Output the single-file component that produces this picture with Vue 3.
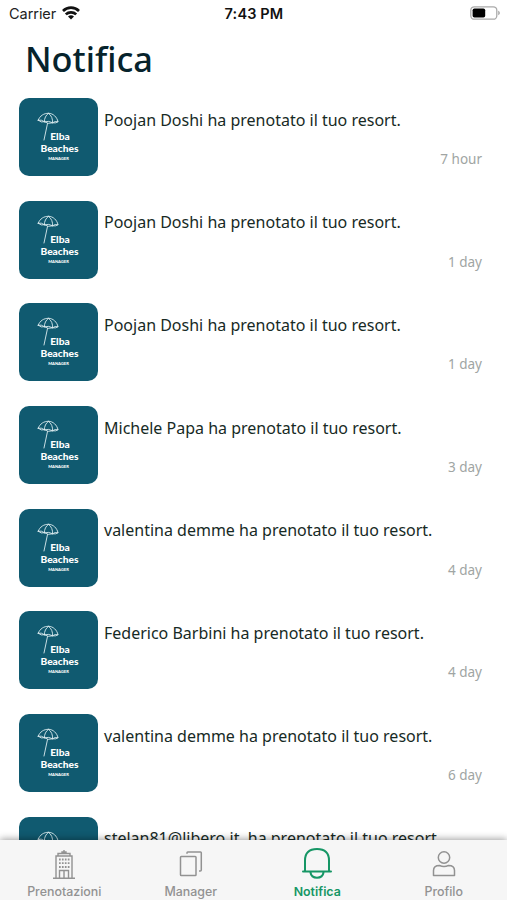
<script setup>
const notifications = [
  { id: 1, name: 'Poojan Doshi', time: '7 hour' },
  { id: 2, name: 'Poojan Doshi', time: '1 day' },
  { id: 3, name: 'Poojan Doshi', time: '1 day' },
  { id: 4, name: 'Michele Papa', time: '3 day' },
  { id: 5, name: 'valentina demme', time: '4 day' },
  { id: 6, name: 'Federico Barbini', time: '4 day' },
  { id: 7, name: 'valentina demme', time: '6 day' },
  { id: 8, name: 'stelan81@libero.it', suffix: ' ', time: '6 day' }
]
</script>

<template>
  <div class="screen">
    <header class="status">
      <div class="carrier">
        <span>Carrier</span>
        <svg class="wifi" width="18" height="14" viewBox="0 0 18 14" fill="none" stroke="#111" stroke-width="2.7">
          <path d="M1 5C5.5.6 12.5.6 17 5" />
          <path d="M3.8 8.400c2.900-2.800 7.500-2.800 10.400 0" />
          <path d="M6 10.500Q9 8.200 12 10.500L9 13.600Z" fill="#111" stroke="none" />
        </svg>
      </div>
      <span class="clock">7:43 PM</span>
      <div class="battery">
        <svg width="31" height="14" viewBox="0 0 31 14">
          <rect x=".8" y=".8" width="26" height="12.4" rx="3.5" fill="#fff" stroke="#aaa" stroke-width="1.3" />
          <rect x="2.6" y="2.5" width="12.6" height="9" rx="1.8" fill="#000" />
          <path d="M28.2 4.8c2.2.7 2.2 3.7 0 4.4Z" fill="#aaa" />
        </svg>
      </div>
    </header>

    <h1 class="title">Notifica</h1>

    <main class="list">
      <article v-for="n in notifications" :key="n.id" class="row">
        <div class="logo">
          <svg class="umbrella" width="22" height="30" viewBox="0 0 22 30" fill="none" stroke="#dcecef" stroke-width=".9" stroke-linejoin="round" stroke-linecap="round">
            <path d="M1.200 8.200C3 3.500 7 1.300 11.500 1.300S20 5 21 9.800Q18 8.800 15.500 10.800Q12 8.500 7.500 9.800Q4.500 7.300 1.200 8.200Z" />
            <path d="M1.200 8.200Q4 11 7.500 9.800M7.500 9.800Q11 12.500 15.500 10.800Q19 11.500 21 9.800" />
            <path d="M11.500 1.300C9 3 7 6.500 7.500 9.800M11.500 1.300C14.500 3.500 16 7 15.500 10.800M10.500 11.500 7 28" />
          </svg>
          <div class="brand">Elba</div>
          <div class="brand second">Beaches</div>
          <div class="role">MANAGER</div>
        </div>
        <div class="content">
          <p class="message">{{ n.name }}{{ n.suffix }} ha prenotato il tuo resort.</p>
          <time class="time">{{ n.time }}</time>
        </div>
      </article>
    </main>

    <nav class="tabs">
      <a class="tab">
        <svg width="24" height="31" viewBox="0 0 24 31" fill="none" stroke="#929292" stroke-width="1.4">
          <path d="M1 29.300H23M4 29V7H20V29M6 7V4.500H18V7M10 4.500V3H14V4.500M12 3V1M7.500 29V21.500H16.500V29M12 21.500V29" />
          <path d="M7 10.500H17.500M7 14.200H17.500M7 18H17.500" stroke-width="1.800" stroke-dasharray="1.700 1.230" />
        </svg>
        <span>Prenotazioni</span>
      </a>
      <a class="tab">
        <svg width="24" height="31" viewBox="0 0 24 31" fill="none" stroke="#929292" stroke-width="1.500" stroke-linejoin="round">
          <rect x="1.500" y="7.500" width="15.500" height="19" rx=".8" />
          <path d="M8 4.800V3.800Q8 3 8.800 3H21.500Q22.300 3 22.300 3.800V21Q22.300 22 21.300 22H20" />
        </svg>
        <span>Manager</span>
      </a>
      <a class="tab active">
        <svg width="32" height="33" viewBox="0 0 32 33" fill="none" stroke="#169665" stroke-width="2" stroke-linecap="round">
          <path d="M4 24.500V13.500C4 6 8.500 2 16 2S28 6 28 13.500V24.500M2 24.500H30M9.500 25.500C10.500 32.500 21.500 32.500 22.500 25.500" />
        </svg>
        <span>Notifica</span>
      </a>
      <a class="tab">
        <svg width="24" height="31" viewBox="0 0 24 31" fill="none" stroke="#929292" stroke-width="1.500" stroke-linejoin="round">
          <circle cx="12" cy="8.500" r="5.700" />
          <path d="M1.500 26.500V21.500C1.500 18 4 16.500 7.500 16.500Q12 18.500 16.500 16.500C20 16.500 22.500 18 22.500 21.500V26.500Z" />
        </svg>
        <span>Profilo</span>
      </a>
    </nav>
  </div>
</template>

<style>
body { margin: 0; background: #fff; overflow: hidden; }
</style>

<style scoped>
.screen {
  display: flex;
  flex-direction: column;
  width: 507px;
  height: 900px;
  overflow: hidden;
  background: #fff;
  font-family: "Noto Sans", sans-serif;
}
.status {
  display: grid;
  grid-template-columns: 1fr auto 1fr;
  align-items: center;
  flex: none;
  height: 27px;
  padding: 0 6px 0 9px;
  font: 14.5px/27px Inter, sans-serif;
  color: #222;
}
.carrier { display: flex; align-items: center; gap: 6px; letter-spacing: -.05px; }
.wifi { display: block; margin-top: -1px; }
.clock { font-weight: 600; font-size: 14.5px; color: #111; letter-spacing: .15px; margin-left: -2px; }
.battery { display: flex; justify-content: flex-end; margin-top: -1px; }
.title {
  flex: none;
  height: 71px;
  margin: 0;
  padding-left: 25px;
  font-size: 34.3px;
  font-weight: 500;
  line-height: 64px;
  color: #06232c;
}
.list {
  display: flex;
  flex-direction: column;
  gap: 24.700px;
  flex: 1;
  min-height: 0;
  overflow: hidden;
}
.row { display: flex; flex: none; height: 78px; padding: 0 25px 0 19px; }
.logo {
  flex: none;
  width: 79px;
  height: 78px;
  box-sizing: border-box;
  padding: 14px 0 0 18px;
  border-radius: 10px;
  background: #105a70;
  color: #fff;
  font-family: Lato, sans-serif;
  overflow: hidden;
}
.umbrella { display: block; margin-bottom: -12px; }
.brand { width: 46px; font-size: 10.2px; line-height: 12px; font-weight: 900; text-align: center; }
.second { margin-left: -.5px; }
.role { width: 43px; margin-top: 2px; font-size: 4.100px; line-height: 6px; font-weight: 900; text-align: center; }
.content { display: flex; flex-direction: column; justify-content: space-between; flex: 1; padding: 10.600px 0 7px 6px; }
.message { margin: 0; font-size: 16px; line-height: 22px; white-space: pre; color: #172a25; }
.time { font-size: 13.500px; line-height: 20px; text-align: right; color: #a0a5a3; }
.tabs {
  display: grid;
  grid-template-columns: repeat(4, 1fr);
  position: relative;
  flex: none;
  box-sizing: border-box;
  height: 60px;
  padding-left: 1px;
  background: #f6f6f6;
  box-shadow: 0 -1px 7px rgba(0, 0, 0, .38);
}
.tab { display: flex; flex-direction: column; align-items: center; justify-content: flex-end; color: #929292; font: 500 12.400px/17px Inter, sans-serif; }
.tab svg { margin-bottom: 3px; }
.tab.active { color: #169665; font-weight: 600; }
.tab.active svg { margin-bottom: 3px; }
</style>
